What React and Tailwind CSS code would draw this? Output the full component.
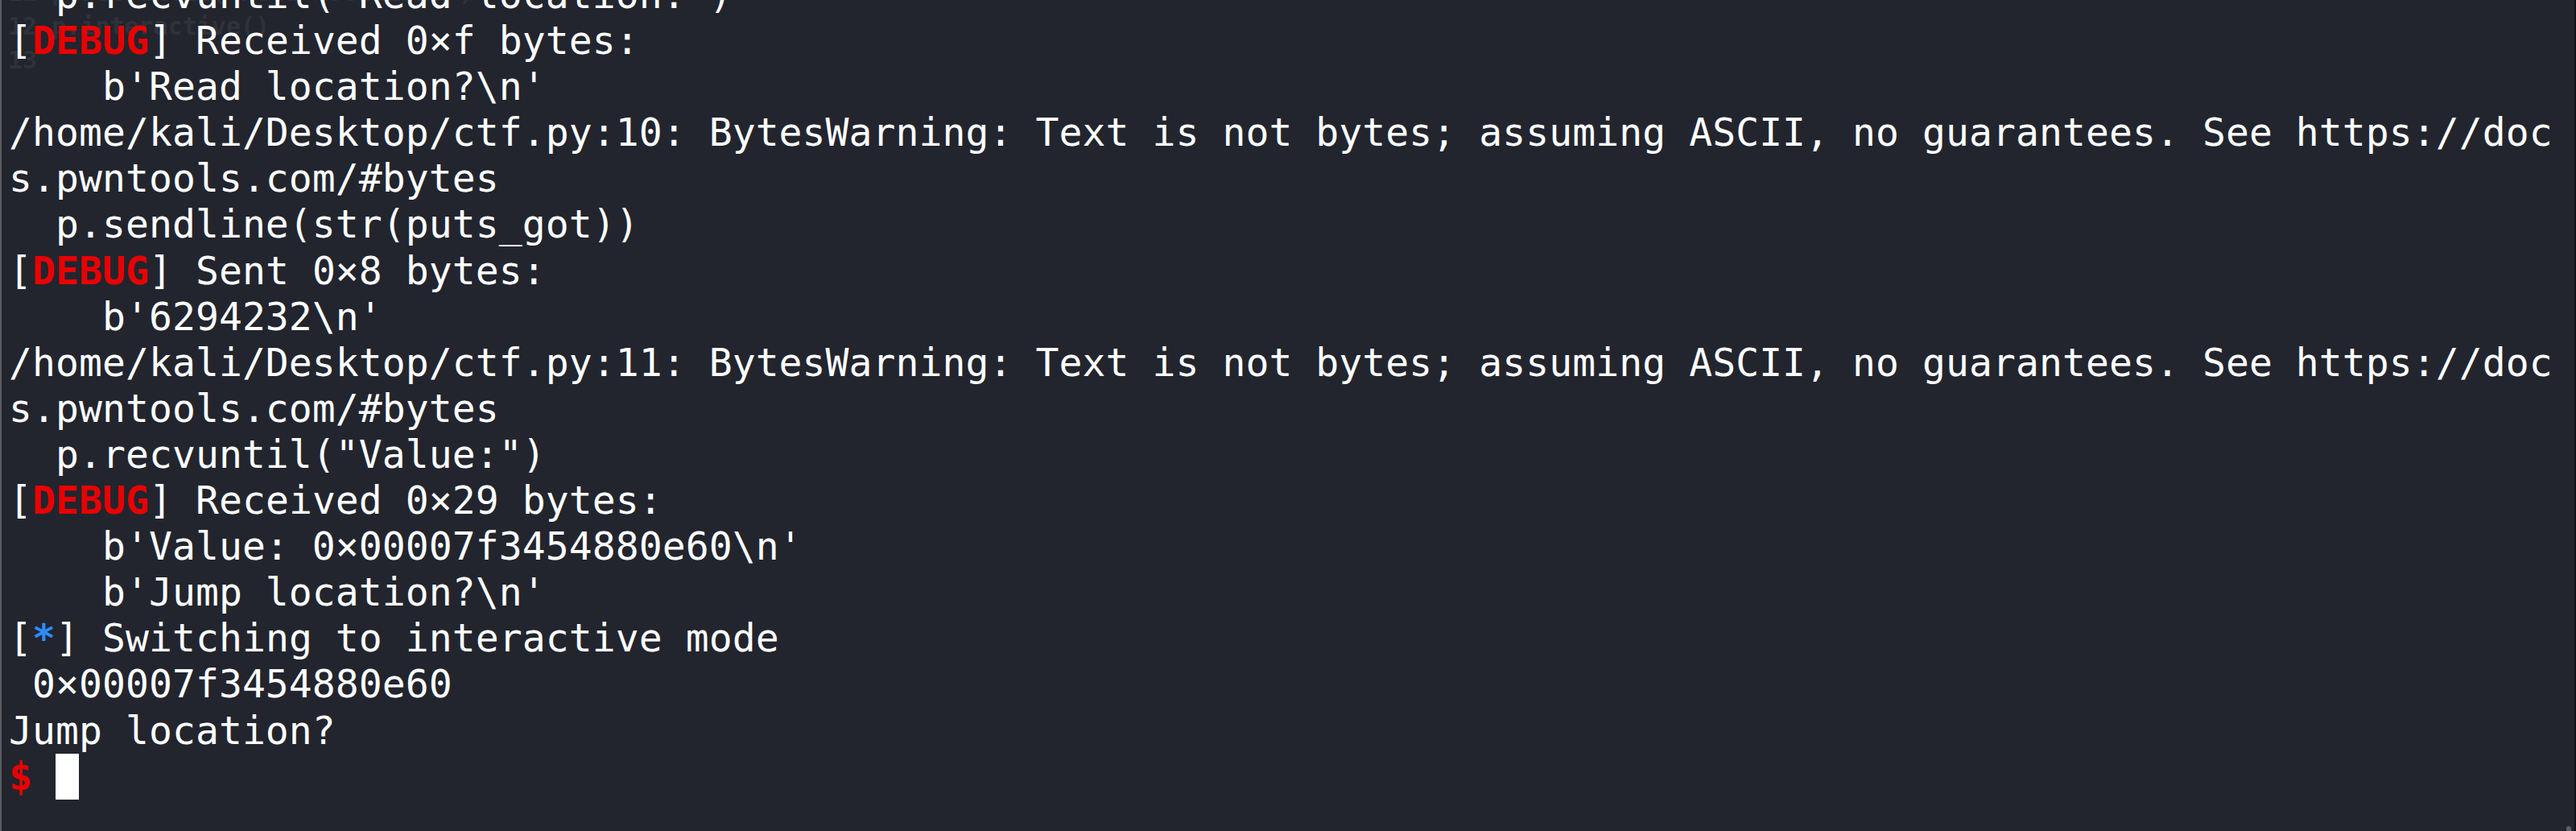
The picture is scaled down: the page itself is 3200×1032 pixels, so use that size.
const ghost = [
  { top: 'top-[-30px]', text: '11 p.recvuntil("Read location:")' },
  { top: 'top-[12px]', text: '12 p.interactive()' },
  { top: 'top-[54px]', text: '13' },
]

const warn = (n) =>
  `/home/kali/Desktop/ctf.py:${n}: BytesWarning: Text is not bytes; assuming ASCII, no guarantees. See https://doc`

function Tag({ children, color }) {
  return (
    <>
      [<span className={`font-bold ${color}`}>{children}</span>]
    </>
  )
}

const Debug = () => <Tag color="text-[#e80000]">DEBUG</Tag>

const lines = [
  '  p.recvuntil("Read location:")',
  <>
    <Debug /> Received 0×f bytes:
  </>,
  "    b'Read location?\\n'",
  warn(10),
  's.pwntools.com/#bytes',
  '  p.sendline(str(puts_got))',
  <>
    <Debug /> Sent 0×8 bytes:
  </>,
  "    b'6294232\\n'",
  warn(11),
  's.pwntools.com/#bytes',
  '  p.recvuntil("Value:")',
  <>
    <Debug /> Received 0×29 bytes:
  </>,
  "    b'Value: 0×00007f3454880e60\\n'",
  "    b'Jump location?\\n'",
  <>
    <Tag color="text-[#2f8cff]">*</Tag> Switching to interactive mode
  </>,
  ' 0×00007f3454880e60',
  'Jump location?',
  <>
    <span className="font-bold text-[#e80000]">$</span>{' '}
    <span className="inline-block w-[29px] h-[57px] align-top bg-white" />
  </>,
]

export default function App() {
  return (
    <div className="relative w-full h-[1032px] overflow-hidden bg-[#22252e] border-l-2 border-l-[#5a5c63] border-r-2 border-r-[#101114] font-['DejaVu_Sans_Mono',monospace]">
      {/* faint editor text bleeding through the translucent terminal */}
      {ghost.map((g) => (
        <div
          key={g.text}
          className={`absolute left-[8px] ${g.top} text-[30px] leading-[42px] whitespace-pre font-bold text-[#2f323b]`}
        >
          {g.text}
        </div>
      ))}

      <div className="relative mt-[-35px] pl-[9px] text-[48px] leading-[57.1px] tracking-[0.09px] text-white">
        {lines.map((l, i) => (
          <div key={i} className="h-[57.1px] whitespace-pre">
            {l}
          </div>
        ))}
      </div>

      <div className="absolute right-[4px] bottom-[-4px] w-[6px] h-[10px] rounded-full bg-[#5c5e64]" />
    </div>
  )
}
